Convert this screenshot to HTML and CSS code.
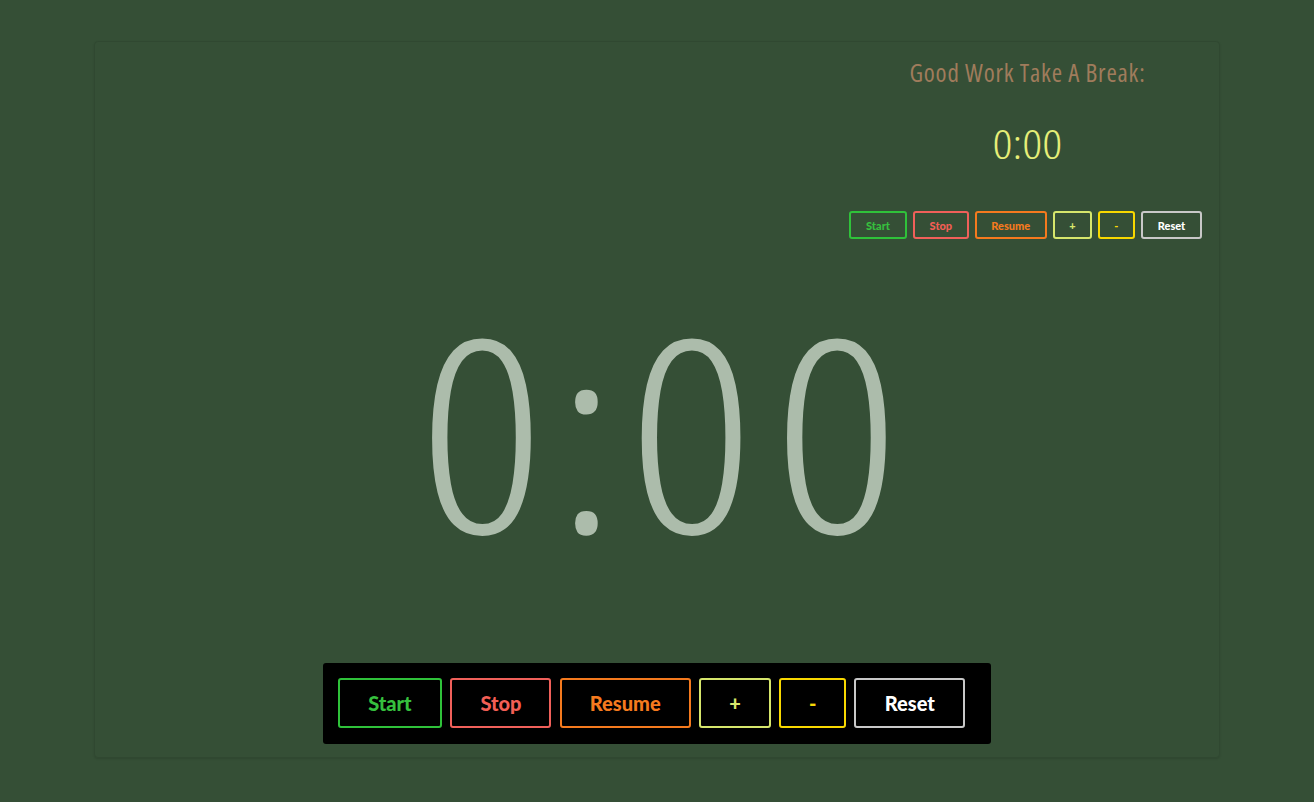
FILE: index.html
```html
<!DOCTYPE html>
<html>
<head>
<meta charset="utf-8">
<link rel="stylesheet" href="styles.css">
</head>
<body>
<div class="panel">
  <div class="top">
    <div class="break">
      <div class="break-title">Good Work Take A Break:</div>
      <div class="break-time">0:00</div>
      <div class="controls small">
        <button class="btn start">Start</button>
        <button class="btn stop">Stop</button>
        <button class="btn resume">Resume</button>
        <button class="btn plus">+</button>
        <button class="btn minus">-</button>
        <button class="btn reset">Reset</button>
      </div>
    </div>
  </div>
  <div class="main-time"><span class="digits"><span class="tight">0:</span>00</span></div>
  <div class="bar">
    <div class="controls big">
      <button class="btn start">Start</button>
      <button class="btn stop">Stop</button>
      <button class="btn resume">Resume</button>
      <button class="btn plus">+</button>
      <button class="btn minus">-</button>
      <button class="btn reset">Reset</button>
    </div>
  </div>
</div>
</body>
</html>
```
FILE: styles.css
```css
html, body {
  margin: 0;
  padding: 0;
  background: #354f36;
  height: 100%;
}
body {
  padding-top: 41px;
  box-sizing: border-box;
}
.panel {
  margin: 0 auto;
  width: 1126px;
  height: 717px;
  box-sizing: border-box;
  border: 1px solid rgba(0, 0, 0, 0.08);
  border-radius: 4px;
  box-shadow: 0 1px 2px rgba(0, 0, 0, 0.12);
  display: flex;
  flex-direction: column;
}
.top {
  display: flex;
  justify-content: flex-end;
  padding-right: 17px;
  padding-top: 15px;
}
.break {
  width: 353px;
  display: flex;
  flex-direction: column;
  align-items: center;
}
.break-title {
  font-family: "Open Sans", Roboto, sans-serif;
  font-stretch: 75%;
  font-weight: 400;
  font-size: 25px;
  line-height: 30px;
  letter-spacing: 0.8px;
  padding-left: 4px;
  color: #a07c5c;
}
.break-time {
  font-family: "Open Sans", Roboto, sans-serif;
  font-stretch: 75%;
  font-weight: 300;
  font-size: 41px;
  line-height: 48px;
  margin-top: 32px;
  padding-left: 3px;
  color: #e6ee78;
  transform: scaleX(1.2);
}
.controls {
  display: flex;
}
.btn {
  font-family: Lato, sans-serif;
  font-weight: 900;
  background: transparent;
  border-style: solid;
  padding: 0;
  margin: 0;
  box-sizing: border-box;
}
.small {
  margin-top: 44px;
  gap: 6.4px;
}
.small .btn {
  height: 28px;
  font-size: 11px;
  border-width: 2px;
  border-radius: 3px;
}
.small .start { width: 57.7px; }
.small .stop { width: 55.3px; }
.small .resume { width: 71.7px; }
.small .plus { width: 38.7px; }
.small .minus { width: 36.7px; }
.small .reset { width: 60.7px; }

.start { color: #36c03e; border-color: #2fc23a; }
.stop { color: #f25e55; border-color: #f0605a; }
.resume { color: #f57a1e; border-color: #f57a1e; }
.plus { color: #d8e86c; border-color: #d6e66c; }
.minus { color: #f6d808; border-color: #f8d800; }
.reset { color: #ffffff; border-color: #c8c8c8; }

.main-time {
  flex: 1;
  display: flex;
  justify-content: center;
  align-items: flex-start;
}
.digits {
  font-family: "Open Sans", Roboto, sans-serif;
  font-stretch: 75%;
  font-weight: 300;
  font-size: 270px;
  line-height: 1;
  letter-spacing: 16.4px;
  padding-left: 20.4px;
  color: #acbcab;
  margin-top: 55px;
  display: inline-block;
  transform: scaleX(1.15);
}
.tight {
  letter-spacing: 9.4px;
}
.bar {
  align-self: center;
  margin-bottom: 13px;
  background: #000;
  border-radius: 3px;
  padding: 15px 26px 16px 15px;
}
.big {
  gap: 8.3px;
}
.big .btn {
  height: 50px;
  font-size: 20px;
  border-width: 2px;
  border-radius: 3px;
}
.big .start { width: 104.4px; }
.big .stop { width: 101px; }
.big .resume { width: 131px; }
.big .plus { width: 72px; }
.big .minus { width: 66.7px; }
.big .reset { width: 111px; }
```
